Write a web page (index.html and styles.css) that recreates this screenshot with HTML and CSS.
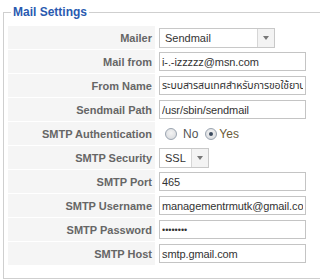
FILE: index.html
```html
<!DOCTYPE html>
<html>
<head>
<meta charset="utf-8">
<link rel="stylesheet" href="styles.css">
</head>
<body>
<fieldset class="settings">
  <legend class="legend">Mail Settings</legend>
  <table class="form">
    <tr>
      <td class="key">Mailer</td>
      <td class="val"><div class="sel sel-mailer"><span class="sel-text">Sendmail</span><span class="sel-btn"><span class="tri"></span></span></div></td>
    </tr>
    <tr>
      <td class="key">Mail from</td>
      <td class="val"><input class="txt" type="text" value="i-.-izzzzz@msn.com"></td>
    </tr>
    <tr>
      <td class="key">From Name</td>
      <td class="val"><input class="txt thai" type="text" value="ระบบสารสนเทศสำหรับการขอใช้ยานพาหนะ"></td>
    </tr>
    <tr>
      <td class="key">Sendmail Path</td>
      <td class="val"><input class="txt" type="text" value="/usr/sbin/sendmail"></td>
    </tr>
    <tr>
      <td class="key">SMTP Authentication</td>
      <td class="val"><div class="radios"><span class="radio"></span><span class="rlabel">No</span><span class="radio checked"></span><span class="rlabel yes">Yes</span></div></td>
    </tr>
    <tr>
      <td class="key">SMTP Security</td>
      <td class="val"><div class="sel sel-ssl"><span class="sel-text">SSL</span><span class="sel-btn"><span class="tri"></span></span></div></td>
    </tr>
    <tr>
      <td class="key">SMTP Port</td>
      <td class="val"><input class="txt" type="text" value="465"></td>
    </tr>
    <tr>
      <td class="key">SMTP Username</td>
      <td class="val"><input class="txt" type="text" value="managementrmutk@gmail.com"></td>
    </tr>
    <tr>
      <td class="key">SMTP Password</td>
      <td class="val"><input class="txt pw" type="password" value="12345678"></td>
    </tr>
    <tr>
      <td class="key">SMTP Host</td>
      <td class="val"><input class="txt" type="text" value="smtp.gmail.com"></td>
    </tr>
  </table>
</fieldset>
</body>
</html>
```
FILE: styles.css
```css
html, body {
  margin: 0;
  padding: 0;
  background: #fff;
}
body {
  padding-top: 5px;
  font-family: "Liberation Sans", Arial, sans-serif;
}
.settings {
  margin: 0 0 0 3px;
  border: 1px solid #cfcfcf;
  border-right: none;
  padding: 5px 0 12px 3px;
  min-width: 0;
}
.legend {
  padding: 0 2px;
  margin-left: 4px;
  font-size: 12px;
  line-height: 15px;
  font-weight: bold;
  color: #2a5ab0;
}
.form {
  border-collapse: separate;
  border-spacing: 1px;
}
.form td {
  height: 23px;
  padding: 0;
}
.form td.key {
  width: 144px;
  padding-right: 3px;
  text-align: right;
  background: #f5f5f5;
  font-size: 11px;
  font-weight: bold;
  color: #666;
}
.form td.val {
  padding-left: 3px;
  vertical-align: middle;
  text-align: left;
}
.txt {
  display: block;
  box-sizing: border-box;
  width: 147px;
  height: 19px;
  margin: 0;
  padding: 0 2px;
  border: 1px solid #c4c4c4;
  font-family: "Liberation Sans", Arial, sans-serif;
  font-size: 11px;
  letter-spacing: -0.1px;
  color: #333;
  background: #fff;
  outline: none;
}
.thai {
  font-family: "Liberation Sans", "Noto Sans Thai", "DejaVu Sans", sans-serif;
  font-size: 10.5px;
  letter-spacing: -0.1px;
}
.pw {
  font-size: 9px;
  letter-spacing: 0;
}
.sel {
  display: flex;
  box-sizing: border-box;
  height: 20px;
  border: 1px solid #c8c8c8;
  background: #fff;
  align-items: stretch;
}
.sel-mailer { width: 116px; }
.sel-ssl { width: 50px; }
.sel-text {
  flex: 1;
  padding-left: 5px;
  font-size: 11px;
  line-height: 18px;
  color: #333;
}
.sel-btn {
  width: 16px;
  border-left: 1px solid #d6d6d6;
  background: #f3f3f3;
  display: flex;
  align-items: center;
  justify-content: center;
}
.tri {
  width: 0;
  height: 0;
  border-left: 3px solid transparent;
  border-right: 3px solid transparent;
  border-top: 4px solid #777;
}
.radios {
  display: flex;
  align-items: center;
  justify-content: flex-start;
  padding-left: 6px;
}
.radio {
  flex: none;
  box-sizing: border-box;
  width: 12px;
  height: 12px;
  border-radius: 50%;
  border: 1px solid #9aa4b0;
  background: radial-gradient(circle at 50% 40%, #f4f4f4 0%, #d4d6da 100%);
  display: flex;
  align-items: center;
  justify-content: center;
}
.radio.checked::after {
  content: "";
  width: 4px;
  height: 4px;
  border-radius: 50%;
  background: #3a4a5e;
}
.rlabel {
  font-size: 12px;
  color: #555;
  margin-left: 6px;
  margin-right: 7px;
}
.rlabel.yes {
  color: #6a5a38;
  margin-left: 2px;
}
```
